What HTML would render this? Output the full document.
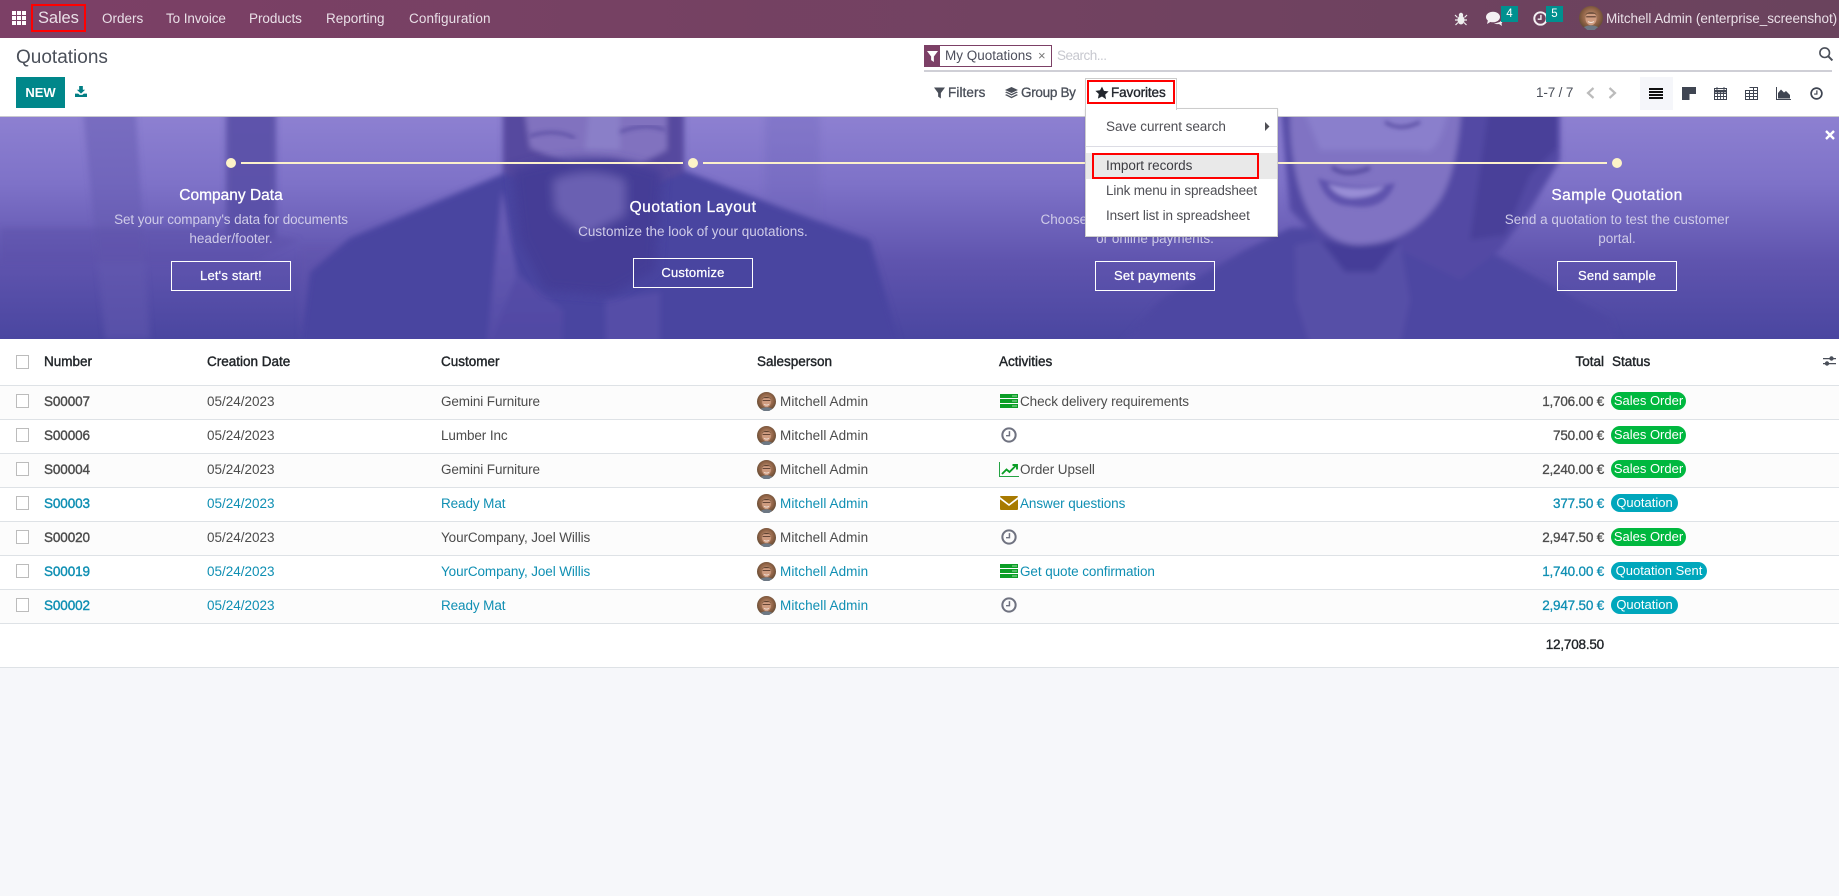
<!DOCTYPE html>
<html><head><meta charset="utf-8"><title>Quotations</title>
<style>
*{box-sizing:border-box}
html,body{margin:0;padding:0;width:1839px;height:896px;overflow:hidden;background:#f6f7fa;font-family:"Liberation Sans",sans-serif;font-size:13.5px;color:#4c4c4c}
.a{position:absolute;white-space:nowrap}
#nav{left:0;top:0;width:1839px;height:38px;background:linear-gradient(90deg,#7c4066,#6a435d)}
.n{top:0;line-height:38px;color:#e9dfe7;font-size:13.5px}
#sub{left:0;top:38px;width:1839px;height:79px;background:#fff;border-bottom:1px solid #c9c9cf}
.c{text-align:center;transform:translateX(-50%)}
.tt{color:#fff;font-size:15.5px;-webkit-text-stroke:.3px #fff}
.ds{color:#cfcbe8;font-size:13.5px}
.bt{border:1.5px solid #fff;width:120px;height:30px;line-height:27px;color:#fff;text-align:center;font-size:13px;letter-spacing:.2px;-webkit-text-stroke:.25px #fff}
#tbl{left:0;top:339px;width:1839px;height:329px;background:#fff;border-bottom:1px solid #dee2e6}
.h{top:0;line-height:46px;color:#212529;-webkit-text-stroke:.4px #212529;font-size:13.5px}
.r{left:0;width:1839px;height:34px;border-bottom:1px solid #dee2e6}
.r .a{top:0;line-height:32px}
.o{background:#fcfcfc}
.l,.l .a{color:#0f8fb3}
.r .cb{left:16px;top:8px;width:13px;height:14px;border:1.3px solid #bcbcbc;background:#fff}
.nm{left:44px;-webkit-text-stroke:.4px;letter-spacing:-.1px}
.d{left:207px}.cu{left:441px;letter-spacing:-.1px}.sp{left:780px;letter-spacing:.08px}.ac{left:1020px;letter-spacing:-.08px}
.to{right:235px;-webkit-text-stroke:.3px;letter-spacing:-.2px}
.b{left:1611px;top:6px!important;height:18px;line-height:17px!important;border-radius:9px;color:#fff!important;font-size:13px;text-align:center}
.g{background:#00b83f;width:75px}.q{background:#00a7bc;width:67px}.qs{background:#00a7bc;width:96px}
.m{left:1106px;line-height:20px;color:#4f4f55;font-size:13.5px;letter-spacing:-.05px}
svg{display:block;overflow:visible}
</style></head><body>
<svg width="0" height="0" style="position:absolute">
<defs>
<radialGradient id="av" cx="50%" cy="45%" r="60%"><stop offset="0" stop-color="#c99a7c"/><stop offset=".6" stop-color="#8f6245"/><stop offset="1" stop-color="#54432f"/></radialGradient>
<symbol id="ava" viewBox="0 0 20 20"><circle cx="10" cy="10" r="10" fill="url(#av)"/><ellipse cx="10" cy="10.500" rx="4.600" ry="5.500" fill="#cf9c80"/><path d="M5.400 7.500C6.500 4.500 13.500 4.500 14.600 7.500L13 6.500H7Z" fill="#5c4130"/><path d="M6 9h8" stroke="#54392c" stroke-width=".9"/><path d="M7.500 13q2.500 1.600 5 0" stroke="#f3e3da" stroke-width=".9" fill="none"/><path d="M4 17.500q6-2.800 12 0l-3 2.500H7Z" fill="#6d7884"/></symbol>
<symbol id="clk" viewBox="0 0 14 14"><circle cx="7" cy="7" r="5.800" fill="none" stroke="currentColor" stroke-width="1.800"/><path d="M7.400 3.600V7.600H4.400" fill="none" stroke="currentColor" stroke-width="1.300"/></symbol>
<symbol id="srv" viewBox="0 0 18 14"><rect width="18" height="4" y="0" fill="#0b9e26"/><rect width="18" height="4" y="5" fill="#0b9e26"/><rect width="18" height="4" y="10" fill="#0b9e26"/><path d="M12 2h5M12 7h5M12 12h5" stroke="#9fe0a8" stroke-width="1"/></symbol>
<symbol id="chart" viewBox="0 0 20 15"><path d="M.5 0V14.500H20" fill="none" stroke="#25a244" stroke-width="1"/><path d="M3 12L7.500 7.500L10.500 10L17 3.500M13.500 3H18V7.500" fill="none" stroke="#0b9e26" stroke-width="1.900"/></symbol>
<symbol id="env" viewBox="0 0 18 14"><path d="M1 0H17Q18 0 18 1L9 8L0 1Q0 0 1 0ZM0 3.200L9 10L18 3.200V13Q18 14 17 14H1Q0 14 0 13Z" fill="#a87a00"/></symbol>
<symbol id="fun" viewBox="0 0 12 12"><path d="M0 0H12L7.500 6V12L4.500 10V6Z" fill="currentColor"/></symbol>
</defs></svg>

<div class="a" id="nav"></div>
<svg class="a" style="left:12px;top:11px" width="14" height="14" fill="#fff"><path d="M0 0h4v4H0zM5 0h4v4H5zM10 0h4v4h-4zM0 5h4v4H0zM5 5h4v4H5zM10 5h4v4h-4zM0 10h4v4H0zM5 10h4v4h-4zM10 10h4v4h-4z"/></svg>
<div class="a" style="left:31px;top:4px;width:55px;height:28px;border:2px solid #f00"></div>
<div class="a n" style="left:38px;font-size:16.500px;line-height:37px;letter-spacing:-.1px">Sales</div>
<div class="a n" style="left:102px">Orders</div>
<div class="a n" style="left:166px;letter-spacing:-.1px">To Invoice</div>
<div class="a n" style="left:249px;letter-spacing:-.05px">Products</div>
<div class="a n" style="left:326px">Reporting</div>
<div class="a n" style="left:409px;letter-spacing:.1px">Configuration</div>
<svg class="a" style="left:1455px;top:12px" width="12" height="13" viewBox="0 0 12 13" fill="#eee"><ellipse cx="6" cy="8" rx="3.500" ry="4.500"/><circle cx="6" cy="3" r="2.200"/><path d="M0 3l2.500 2.500M12 3L9.500 5.500M0 8h3M12 8H9M.5 13L3 10.500M11.500 13L9 10.500" stroke="#eee" stroke-width="1.200"/></svg>
<svg class="a" style="left:1486px;top:11px" width="17" height="15" viewBox="0 0 17 15" fill="#f4f0f3"><ellipse cx="7" cy="6" rx="7" ry="5.300"/><path d="M2 9L1 13L6 10ZM12 11.500Q15 11 16 8Q17 11 15.500 12.500L16 15L13 13Q10 13.500 8 12.500Q10 12.500 12 11.500Z"/></svg>
<div class="a" style="left:1501px;top:6px;width:17px;height:16px;background:#00908f;color:#fff;font-size:11.500px;line-height:16px;text-align:center">4</div>
<svg class="a" style="left:1533px;top:11px;color:#f4f0f3" width="15" height="15"><use href="#clk"/></svg>
<div class="a" style="left:1546px;top:6px;width:17px;height:16px;background:#00908f;color:#fff;font-size:11.500px;line-height:16px;text-align:center">5</div>
<svg class="a" style="left:1579px;top:6px" width="24" height="24"><use href="#ava"/></svg>
<div class="a n" style="left:1606px;font-size:13.500px;letter-spacing:-.06px">Mitchell Admin (enterprise_screenshot)</div>

<div class="a" id="sub"></div>
<div class="a" style="left:16px;top:46px;font-size:19px;line-height:24px;color:#4a4f59">Quotations</div>
<div class="a" style="left:16px;top:77px;width:49px;height:31px;background:#00878a;color:#fff;font-weight:bold;font-size:13px;line-height:31px;text-align:center">NEW</div>
<svg class="a" style="left:75px;top:86px" width="12" height="11" viewBox="0 0 13 13" preserveAspectRatio="none" fill="#017e84"><path d="M4.500 0H8.500V4.500H11L6.500 9L2 4.500H4.500ZM0 9H3.500L5 10.500H8L9.500 9H13V13H0Z"/></svg>

<div class="a" style="left:924px;top:45px;width:128px;height:22px;border:1px solid #7c4066;background:#fff"></div>
<div class="a" style="left:924px;top:45px;width:16px;height:22px;background:#7c4066"></div>
<svg class="a" style="left:927px;top:51px;color:#fff" width="11" height="11"><use href="#fun"/></svg>
<div class="a" style="left:945px;top:45px;line-height:21px;color:#4d4f5c;font-size:13.500px">My Quotations</div>
<div class="a" style="left:1038px;top:45px;line-height:21px;color:#777;font-size:13px">×</div>
<div class="a" style="left:1057px;top:45px;line-height:21px;color:#c7c8cf;font-size:13.500px;letter-spacing:-.5px">Search...</div>
<div class="a" style="left:924px;top:70px;width:908px;height:1.500px;background:#cfcfd6"></div>
<svg class="a" style="left:1819px;top:47px" width="14" height="14" viewBox="0 0 14 14" fill="none" stroke="#4a4f59" stroke-width="1.600"><circle cx="5.700" cy="5.700" r="4.800"/><path d="M9.200 9.200L13.400 13.400" stroke-width="2"/></svg>

<svg class="a" style="left:934px;top:87px;color:#4a4f59" width="11" height="12"><use href="#fun"/></svg>
<div class="a" style="left:948px;top:83px;line-height:20px;color:#4a4f59;-webkit-text-stroke:.3px #4a4f59;letter-spacing:.1px">Filters</div>
<svg class="a" style="left:1005px;top:87px" width="13" height="13" viewBox="0 0 13 13" fill="#4a4f59"><path d="M6.500 0L13 3L6.500 6L0 3ZM0 5.200L1.500 4.600L6.500 7L11.500 4.600L13 5.200L6.500 8.500ZM0 8L1.500 7.300L6.500 9.700L11.500 7.300L13 8L6.500 11.200Z"/></svg>
<div class="a" style="left:1021px;top:83px;line-height:20px;color:#4a4f59;-webkit-text-stroke:.3px #4a4f59;letter-spacing:-.3px">Group By</div>
<div class="a" style="left:1085px;top:78px;width:92px;height:32px;background:#fff;border:1px solid #ccc;border-bottom:0;z-index:5"></div>
<div class="a" style="left:1087px;top:80px;width:88px;height:24px;border:2px solid #f00;z-index:7"></div>
<svg class="a" style="left:1095px;top:86px;z-index:7" width="14" height="14" viewBox="0 0 24 24" fill="#22262d"><path d="M12 1l3.400 7.300 7.900 1-5.800 5.500 1.500 7.900L12 18l-7 3.700 1.500-7.900L.7 8.300l7.900-1z"/></svg>
<div class="a" style="left:1111px;top:83px;line-height:20px;color:#22262d;z-index:7;-webkit-text-stroke:.35px #22262d;letter-spacing:-.1px">Favorites</div>

<div class="a" style="left:1536px;top:83px;line-height:20px;color:#4a4f59;font-size:13.500px;letter-spacing:-.15px">1-7 / 7</div>
<svg class="a" style="left:1586px;top:87px" width="9" height="12" fill="none" stroke="#bbb" stroke-width="2.200"><path d="M7.500 1L2 6l5.500 5"/></svg>
<svg class="a" style="left:1608px;top:87px" width="9" height="12" fill="none" stroke="#bbb" stroke-width="2.200"><path d="M1.500 1L7 6l-5.500 5"/></svg>
<div class="a" style="left:1640px;top:77px;width:33px;height:33px;background:#f5f6fa"></div>
<svg class="a" style="left:1649px;top:88px" width="14" height="11" fill="#111"><path d="M0 0h14v2H0zM0 3h14v2H0zM0 6h14v2H0zM0 9h14v2H0z"/></svg>
<svg class="a" style="left:1682px;top:87px" width="14" height="13" fill="#3f4552"><path d="M0 0h14v7H7.500v6H0z"/></svg>
<svg class="a" style="left:1714px;top:87px" width="13" height="13" viewBox="0 0 13 13" fill="none" stroke="#3f4552"><rect x=".5" y="1.500" width="12" height="11"/><path d="M.5 4.200h12" stroke-width="2.500"/><path d="M.5 6.500h12M.5 9.500h12M3.500 4v9M6.500 4v9M9.500 4v9M3 0v3M10 0v3" stroke-width=".9"/></svg>
<svg class="a" style="left:1745px;top:87px" width="13" height="13" viewBox="0 0 13 13" fill="none" stroke="#3f4552"><path d="M.5 3.500h12v9H.5zM4.500.5h8v12M.5 6.500h12M.5 9.500h12M4.500 3v10M8.500 .5v12"/></svg>
<svg class="a" style="left:1776px;top:87px" width="15" height="13" viewBox="0 0 15 13"><path d="M.5 0V12.500H15" fill="none" stroke="#3f4552"/><path d="M2 11.500V6L5 2.500L8 5.500L10 4L14 8V11.500Z" fill="#3f4552"/></svg>
<svg class="a" style="left:1810px;top:87px;color:#3f4552" width="13" height="13"><use href="#clk"/></svg>

<div class="a" style="left:0;top:117px;width:1839px;height:222px;overflow:hidden">
<svg width="1839" height="222" viewBox="0 117 1839 222" style="position:absolute;left:0;top:0">
<defs>
<linearGradient id="bg" x1="0" y1="0" x2="0" y2="1"><stop offset="0" stop-color="#8d80d1"/><stop offset=".3" stop-color="#7e72c8"/><stop offset=".65" stop-color="#5f54ae"/><stop offset="1" stop-color="#4a46a0"/></linearGradient>
<linearGradient id="shirt" x1="0" y1="0" x2="0" y2="1"><stop offset="0" stop-color="#7063bb"/><stop offset="1" stop-color="#544ca6"/></linearGradient>
<filter id="b2" x="-10%" y="-10%" width="120%" height="120%"><feGaussianBlur stdDeviation="2"/></filter>
<filter id="b3" x="-10%" y="-10%" width="120%" height="120%"><feGaussianBlur stdDeviation="3"/></filter>
<filter id="b5" x="-10%" y="-10%" width="120%" height="120%"><feGaussianBlur stdDeviation="5"/></filter>
</defs>
<rect x="0" y="117" width="1839" height="222" fill="url(#bg)"/>
<g filter="url(#b3)">
<path d="M226 100H276V240H226Z" fill="#5a4fa6" opacity=".9"/>
<path d="M82 100H135L150 339H105Z" fill="#635ab0" opacity=".5"/>
<path d="M0 228H240L300 240L255 262H0Z" fill="#5b50a8" opacity=".45"/>
<path d="M300 245H345V339H300Z" fill="#6156ad" opacity=".35"/>
<path d="M765 100H820V290H765Z" fill="#6d62b8" opacity=".3"/>
<path d="M300 345L310 272L350 238L500 175L510 170H683L780 207L870 240L900 345Z" fill="#4a44a0"/>
<path d="M503 100H684V172L640 190H540L503 172Z" fill="#57489f"/>
<path d="M523 100H667V150L640 164L610 160L570 164L530 148Z" fill="#8172bf"/>
<path d="M590 100H620V150H585Z" fill="#8f84cc" opacity=".7"/>
<path d="M502 190L487 345H562L563 310L517 274Z" fill="url(#shirt)" opacity=".9"/>
<path d="M517 274L563 310L563 345H490Z" fill="#4f47a3" opacity=".55"/>
<path d="M605 300L660 292L660 345H606Z" fill="#5a52aa" opacity=".7"/>
</g>
<g filter="url(#b5)">
<path d="M512 170Q590 145 662 172L655 270L610 295L545 290L520 240Z" fill="#443c96"/>
<path d="M553 180Q590 165 625 180L625 215L585 235L555 210Z" fill="#7669b9" opacity=".8"/>
</g>
<path d="M530 136Q555 128 575 138M620 132Q645 122 665 130" stroke="#4c3f98" stroke-width="2" fill="none" filter="url(#b2)"/>
<g filter="url(#b3)">
<path d="M1120 345L1160 300L1245 250L1290 228H1450L1487 250L1610 318L1620 345Z" fill="#4e47a2"/>
<path d="M1280 100H1560L1560 160L1530 210L1500 250L1460 280L1400 250L1340 260L1290 210Z" fill="#524aa4"/>
<path d="M1290 100H1462Q1458 170 1440 200Q1410 245 1355 245Q1315 240 1300 190Q1288 150 1290 100Z" fill="#8073c3"/>
<path d="M1300 100H1450Q1440 160 1420 150H1320Z" fill="#8a7fcc"/>
<path d="M1295 245L1320 240L1345 272H1375L1400 242L1410 300L1400 345H1310L1296 300Z" fill="#5a52aa" opacity=".7"/>
<path d="M1320 240L1345 272H1375L1400 240Q1365 250 1320 240Z" fill="#453d98"/>
<path d="M1490 100H1557L1557 148L1530 175L1505 235L1470 240Z" fill="#4a4199"/>
</g>
<g filter="url(#b2)">
<path d="M1318 178Q1355 192 1395 183Q1385 212 1350 206Q1325 205 1318 178Z" fill="#5f52ad"/>
<path d="M1328 184Q1355 192 1385 186Q1375 198 1350 198Q1335 196 1328 184Z" fill="#998ed6"/>
<path d="M1332 167Q1345 178 1370 168" stroke="#54499f" stroke-width="4" fill="none"/>
<path d="M1385 122Q1400 132 1420 122" stroke="#54499f" stroke-width="3" fill="none"/>
</g>
</svg>
<div class="a" style="left:241px;top:45px;width:442px;height:2px;background:#fbf0cc"></div>
<div class="a" style="left:703px;top:45px;width:904px;height:2px;background:#fbf0cc"></div>
<div class="a" style="left:226px;top:41px;width:10px;height:10px;border-radius:50%;background:#fdf3c8"></div>
<div class="a" style="left:688px;top:41px;width:10px;height:10px;border-radius:50%;background:#fdf3c8"></div>
<div class="a" style="left:1612px;top:41px;width:10px;height:10px;border-radius:50%;background:#fdf3c8"></div>
<div class="a c tt" style="left:231px;top:69px;line-height:20px">Company Data</div>
<div class="a c ds" style="left:231px;top:93px;line-height:20px;letter-spacing:-.1px">Set your company's data for documents</div>
<div class="a c ds" style="left:231px;top:112px;line-height:20px">header/footer.</div>
<div class="a bt" style="left:171px;top:144px">Let's start!</div>
<div class="a c tt" style="left:693px;top:81px;line-height:20px;letter-spacing:.55px">Quotation Layout</div>
<div class="a c ds" style="left:693px;top:105px;line-height:20px">Customize the look of your quotations.</div>
<div class="a bt" style="left:633px;top:141px">Customize</div>
<div class="a c tt" style="left:1155px;top:69px;line-height:20px">Online Payments</div>
<div class="a c ds" style="left:1155px;top:93px;line-height:20px">Choose between electronic signatures</div>
<div class="a c ds" style="left:1155px;top:112px;line-height:20px">or online payments.</div>
<div class="a bt" style="left:1095px;top:144px">Set payments</div>
<div class="a c tt" style="left:1617px;top:69px;line-height:20px;letter-spacing:.45px">Sample Quotation</div>
<div class="a c ds" style="left:1617px;top:93px;line-height:20px">Send a quotation to test the customer</div>
<div class="a c ds" style="left:1617px;top:112px;line-height:20px">portal.</div>
<div class="a bt" style="left:1557px;top:144px">Send sample</div>
<svg class="a" style="left:1825px;top:13px" width="10" height="10" stroke="#fff" stroke-width="2.400"><path d="M1 1l8 8M9 1l-8 8"/></svg>
</div>

<div class="a" style="left:1085px;top:108px;width:193px;height:129px;background:#fff;border:1px solid #ccc;box-shadow:0 1px 2px rgba(0,0,0,.12);z-index:4"></div>
<div class="a m" style="top:117px;z-index:6">Save current search</div>
<svg class="a" style="left:1265px;top:122px;z-index:6" width="5" height="9" fill="#4f4f55"><path d="M0 0l4.500 4.500L0 9z"/></svg>
<div class="a" style="left:1086px;top:146px;width:191px;height:1px;background:#dcdce4;z-index:6"></div>
<div class="a" style="left:1086px;top:153px;width:191px;height:26px;background:#e9e9e9;z-index:6"></div>
<div class="a" style="left:1092px;top:153px;width:167px;height:26px;border:2px solid #f00;z-index:7"></div>
<div class="a m" style="top:156px;z-index:8;color:#3c3c42">Import records</div>
<div class="a m" style="top:181px;z-index:6;letter-spacing:-.15px">Link menu in spreadsheet</div>
<div class="a m" style="top:206px;z-index:6;letter-spacing:-.1px">Insert list in spreadsheet</div>

<div class="a" id="tbl">
<div class="a" style="left:16px;top:16px;width:13px;height:14px;border:1.300px solid #bcbcbc"></div>
<div class="a h" style="left:44px">Number</div>
<div class="a h" style="left:207px">Creation Date</div>
<div class="a h" style="left:441px">Customer</div>
<div class="a h" style="left:757px">Salesperson</div>
<div class="a h" style="left:999px">Activities</div>
<div class="a h" style="right:235px">Total</div>
<div class="a h" style="left:1612px">Status</div>
<div class="a" style="left:0;top:46px;width:1839px;height:1px;background:#dee2e6"></div>
<svg class="a" style="left:1823px;top:16px" width="13" height="12" fill="#4a4f59"><path d="M0 3h13v1.200H0zM0 8h13v1.200H0z"/><circle cx="8.500" cy="3.500" r="2.200"/><circle cx="4" cy="8.500" r="2.200"/></svg>
</div>

<div class="a r o" style="top:386px"><div class="a cb"></div><div class="a nm">S00007</div><div class="a d">05/24/2023</div><div class="a cu">Gemini Furniture</div><svg class="a" style="left:757px;top:6px" width="19" height="19"><use href="#ava"/></svg><div class="a sp">Mitchell Admin</div><svg class="a" style="left:1000px;top:8px" width="18" height="14"><use href="#srv"/></svg><div class="a ac">Check delivery requirements</div><div class="a to">1,706.00 €</div><div class="a b g">Sales Order</div></div>
<div class="a r" style="top:420px;background:#fff"><div class="a cb"></div><div class="a nm">S00006</div><div class="a d">05/24/2023</div><div class="a cu">Lumber Inc</div><svg class="a" style="left:757px;top:6px" width="19" height="19"><use href="#ava"/></svg><div class="a sp">Mitchell Admin</div><svg class="a" style="left:1001px;top:7px;color:#6f7280" width="16" height="16"><use href="#clk"/></svg><div class="a to">750.00 €</div><div class="a b g">Sales Order</div></div>
<div class="a r o" style="top:454px"><div class="a cb"></div><div class="a nm">S00004</div><div class="a d">05/24/2023</div><div class="a cu">Gemini Furniture</div><svg class="a" style="left:757px;top:6px" width="19" height="19"><use href="#ava"/></svg><div class="a sp">Mitchell Admin</div><svg class="a" style="left:999px;top:8px" width="20" height="15"><use href="#chart"/></svg><div class="a ac">Order Upsell</div><div class="a to">2,240.00 €</div><div class="a b g">Sales Order</div></div>
<div class="a r l" style="top:488px;background:#fff"><div class="a cb"></div><div class="a nm">S00003</div><div class="a d">05/24/2023</div><div class="a cu">Ready Mat</div><svg class="a" style="left:757px;top:6px" width="19" height="19"><use href="#ava"/></svg><div class="a sp">Mitchell Admin</div><svg class="a" style="left:1000px;top:8px" width="18" height="14"><use href="#env"/></svg><div class="a ac">Answer questions</div><div class="a to">377.50 €</div><div class="a b q">Quotation</div></div>
<div class="a r o" style="top:522px"><div class="a cb"></div><div class="a nm">S00020</div><div class="a d">05/24/2023</div><div class="a cu">YourCompany, Joel Willis</div><svg class="a" style="left:757px;top:6px" width="19" height="19"><use href="#ava"/></svg><div class="a sp">Mitchell Admin</div><svg class="a" style="left:1001px;top:7px;color:#6f7280" width="16" height="16"><use href="#clk"/></svg><div class="a to">2,947.50 €</div><div class="a b g">Sales Order</div></div>
<div class="a r l" style="top:556px;background:#fff"><div class="a cb"></div><div class="a nm">S00019</div><div class="a d">05/24/2023</div><div class="a cu">YourCompany, Joel Willis</div><svg class="a" style="left:757px;top:6px" width="19" height="19"><use href="#ava"/></svg><div class="a sp">Mitchell Admin</div><svg class="a" style="left:1000px;top:8px" width="18" height="14"><use href="#srv"/></svg><div class="a ac">Get quote confirmation</div><div class="a to">1,740.00 €</div><div class="a b qs">Quotation Sent</div></div>
<div class="a r o l" style="top:590px"><div class="a cb"></div><div class="a nm">S00002</div><div class="a d">05/24/2023</div><div class="a cu">Ready Mat</div><svg class="a" style="left:757px;top:6px" width="19" height="19"><use href="#ava"/></svg><div class="a sp">Mitchell Admin</div><svg class="a" style="left:1001px;top:7px;color:#6f7280" width="16" height="16"><use href="#clk"/></svg><div class="a to">2,947.50 €</div><div class="a b q">Quotation</div></div>
<div class="a" style="right:235px;top:635px;line-height:20px;color:#212529;-webkit-text-stroke:.35px #212529;letter-spacing:-.2px">12,708.50</div>
</body></html>
